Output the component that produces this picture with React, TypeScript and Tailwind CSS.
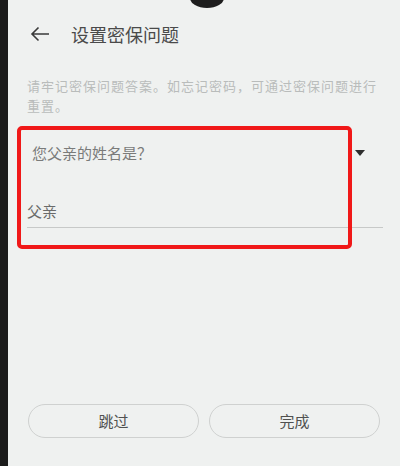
import { useState } from "react";

const cjk = { fontFamily: '"Noto Sans CJK SC", "Noto Sans", sans-serif' };

export default function App() {
  const [answer, setAnswer] = useState("父亲");

  return (
    <div className="flex h-[466px] w-[400px] overflow-hidden bg-[#1b1b1b]" style={cjk}>
      {/* phone bezel on the left */}
      <div className="w-[8px] shrink-0 bg-[#1b1b1b]" />

      <div className="relative flex flex-1 flex-col bg-[#eff1f0]">
        {/* camera notch */}
        <div className="absolute left-[182px] top-[-12px] h-[20px] w-[34px] rounded-[50%] bg-[#1e1e1e]" />

        {/* Header */}
        <header className="flex h-[68px] items-center pl-[22px]">
          <svg width="20" height="16" viewBox="0 0 20 16" fill="none" stroke="#3a3a3a" strokeWidth="1.6">
            <path d="M19 8H2M8.5 1.5L2 8l6.5 6.5" />
          </svg>
          <h1 className="ml-[21px] text-[18px] text-[#4a4a4a]">设置密保问题</h1>
        </header>

        {/* Hint */}
        <p className="mt-[8px] pl-[19px] pr-[14px] text-[13px] leading-[20px] tracking-[1px] text-[#b9bcbb]">
          请牢记密保问题答案。如忘记密码，可通过密保问题进行重置。
        </p>

        {/* Question + answer */}
        <section className="relative mt-[18px] pl-[19px] pr-[17px]">
          <div className="flex h-[38px] items-center justify-between pl-[5px]">
            <span className="text-[15px] text-[#7a7b7a]">您父亲的姓名是？</span>
            <svg width="10" height="6" viewBox="0 0 10 6" className="mr-[18px]">
              <path d="M0 0h10L5 6z" fill="#2e2e2e" />
            </svg>
          </div>
          <div className="mt-[26px] border-b border-[#c7c9c8] pb-[5px]">
            <input
              value={answer}
              onChange={(e) => setAnswer(e.target.value)}
              className="h-[22px] w-full bg-transparent text-[15px] text-[#6a6b6a] outline-none"
              style={cjk}
            />
          </div>

          {/* red highlight frame */}
          <div className="pointer-events-none absolute left-[9px] top-[-8px] h-[123px] w-[335px] rounded-[5px] border-[4px] border-[#f01818]" />
        </section>

        <div className="flex-1" />

        {/* Buttons */}
        <footer className="mb-[28px] flex gap-[10px] px-[20px]">
          <button className="h-[34px] flex-1 rounded-full border border-[#cfd1d0] text-[15px] text-[#505150]">
            跳过
          </button>
          <button className="h-[34px] flex-1 rounded-full border border-[#cfd1d0] text-[15px] text-[#505150]">
            完成
          </button>
        </footer>
      </div>
    </div>
  );
}
